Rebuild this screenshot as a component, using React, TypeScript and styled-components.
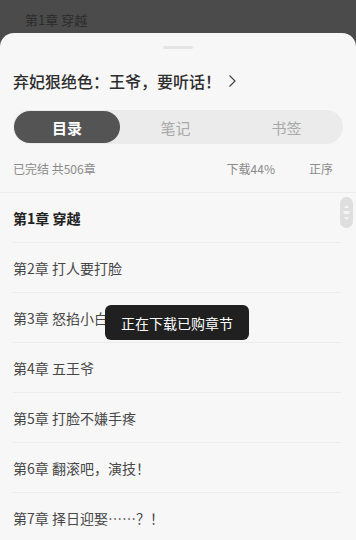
import React from 'react';
import styled, { createGlobalStyle } from 'styled-components';

const GlobalStyle = createGlobalStyle`
  html, body {
    margin: 0;
    padding: 0;
    background: #4b4b4b;
    font-family: "Noto Sans CJK SC", "Noto Sans", sans-serif;
    overflow: hidden;
  }
`;

const Screen = styled.div`
  width: 356px;
  height: 540px;
  position: relative;
  overflow: hidden;
  background: #4b4b4b;
`;

const ReaderLine = styled.div`
  height: 33px;
  padding-left: 25px;
  box-sizing: border-box;
  padding-top: 11px;
  font-size: 13px;
  line-height: 18px;
  color: #2b2b2b;
`;

const Sheet = styled.div`
  background: #f7f7f7;
  border-radius: 14px 14px 0 0;
  height: 507px;
  box-sizing: border-box;
  padding-top: 13px;
  position: relative;
  overflow: hidden;
`;

const Handle = styled.div`
  width: 30px;
  height: 3px;
  border-radius: 2px;
  background: #e4e4e4;
  margin: 0 auto;
`;

const Title = styled.div`
  display: flex;
  align-items: center;
  gap: 6px;
  margin: 20px 13px 0;
  font-size: 16px;
  line-height: 24px;
  font-weight: 500;
  color: #2e2e2e;
`;

const Tabs = styled.div`
  margin: 17px 13px 0;
  height: 34px;
  border-radius: 17px;
  background: #ebebeb;
  display: grid;
  grid-template-columns: 106px 1fr 1fr;
  padding: 1px;
  box-sizing: border-box;
`;

const Tab = styled.div<{ $active?: boolean }>`
  display: flex;
  align-items: center;
  justify-content: center;
  border-radius: 16px;
  font-size: 15px;
  font-weight: ${p => (p.$active ? 700 : 400)};
  background: ${p => (p.$active ? '#545454' : 'transparent')};
  color: ${p => (p.$active ? '#ffffff' : '#a8a8a8')};
`;

const InfoRow = styled.div`
  display: flex;
  align-items: center;
  margin-top: 15px;
  padding: 0 23px 13px 13px;
  font-size: 12px;
  line-height: 20px;
  color: #8a8a8a;
  border-bottom: 1px solid #ececec;
`;

const InfoLeft = styled.span`
  flex: 1;
`;

const InfoRight = styled.span`
  margin-left: 34px;
`;

const List = styled.div`
  padding: 0 15px 0 13px;
`;

const Row = styled.div<{ $current?: boolean }>`
  height: 49px;
  display: flex;
  align-items: center;
  border-bottom: 1px solid #ececec;
  font-size: 14px;
  color: ${p => (p.$current ? '#222' : '#474747')};
  font-weight: ${p => (p.$current ? 700 : 400)};
`;

const Thumb = styled.div`
  position: absolute;
  right: 3px;
  top: 164px;
  width: 13px;
  height: 31px;
  border-radius: 7px;
  background: #dedede;
  display: flex;
  align-items: center;
  justify-content: center;
`;

const Toast = styled.div`
  position: absolute;
  left: 105px;
  top: 272px;
  width: 144px;
  height: 35px;
  border-radius: 6px;
  background: #202020;
  color: #fff;
  font-size: 14px;
  display: flex;
  align-items: center;
  justify-content: center;
`;

const chapters = [
  '第1章 穿越',
  '第2章 打人要打脸',
  '第3章 怒掐小白花',
  '第4章 五王爷',
  '第5章 打脸不嫌手疼',
  '第6章 翻滚吧，演技！',
  '第7章 择日迎娶……？！',
];

export default function App() {
  return (
    <Screen>
      <GlobalStyle />
      <ReaderLine>第1章 穿越</ReaderLine>
      <Sheet>
        <Handle />
        <Title>
          弃妃狠绝色：王爷，要听话！
          <svg width="10" height="14" viewBox="0 0 10 14">
            <path d="M2.5 1.5 L8 7 L2.5 12.5" fill="none" stroke="#444" strokeWidth="1.2" />
          </svg>
        </Title>
        <Tabs>
          <Tab $active>目录</Tab>
          <Tab>笔记</Tab>
          <Tab>书签</Tab>
        </Tabs>
        <InfoRow>
          <InfoLeft>已完结 共506章</InfoLeft>
          <span>下载44%</span>
          <InfoRight>正序</InfoRight>
        </InfoRow>
        <List>
          {chapters.map((c, i) => (
            <Row key={c} $current={i === 0}>{c}</Row>
          ))}
        </List>
        <Thumb>
          <svg width="7" height="25" viewBox="0 0 7 25">
            <path d="M3.5 5 L6 8 L1 8 Z" fill="#f4f4f4" />
            <rect x="0.5" y="11" width="6" height="3" fill="#f4f4f4" />
            <path d="M3.5 20 L6 17 L1 17 Z" fill="#f4f4f4" />
          </svg>
        </Thumb>
        <Toast>正在下载已购章节</Toast>
      </Sheet>
    </Screen>
  );
}
